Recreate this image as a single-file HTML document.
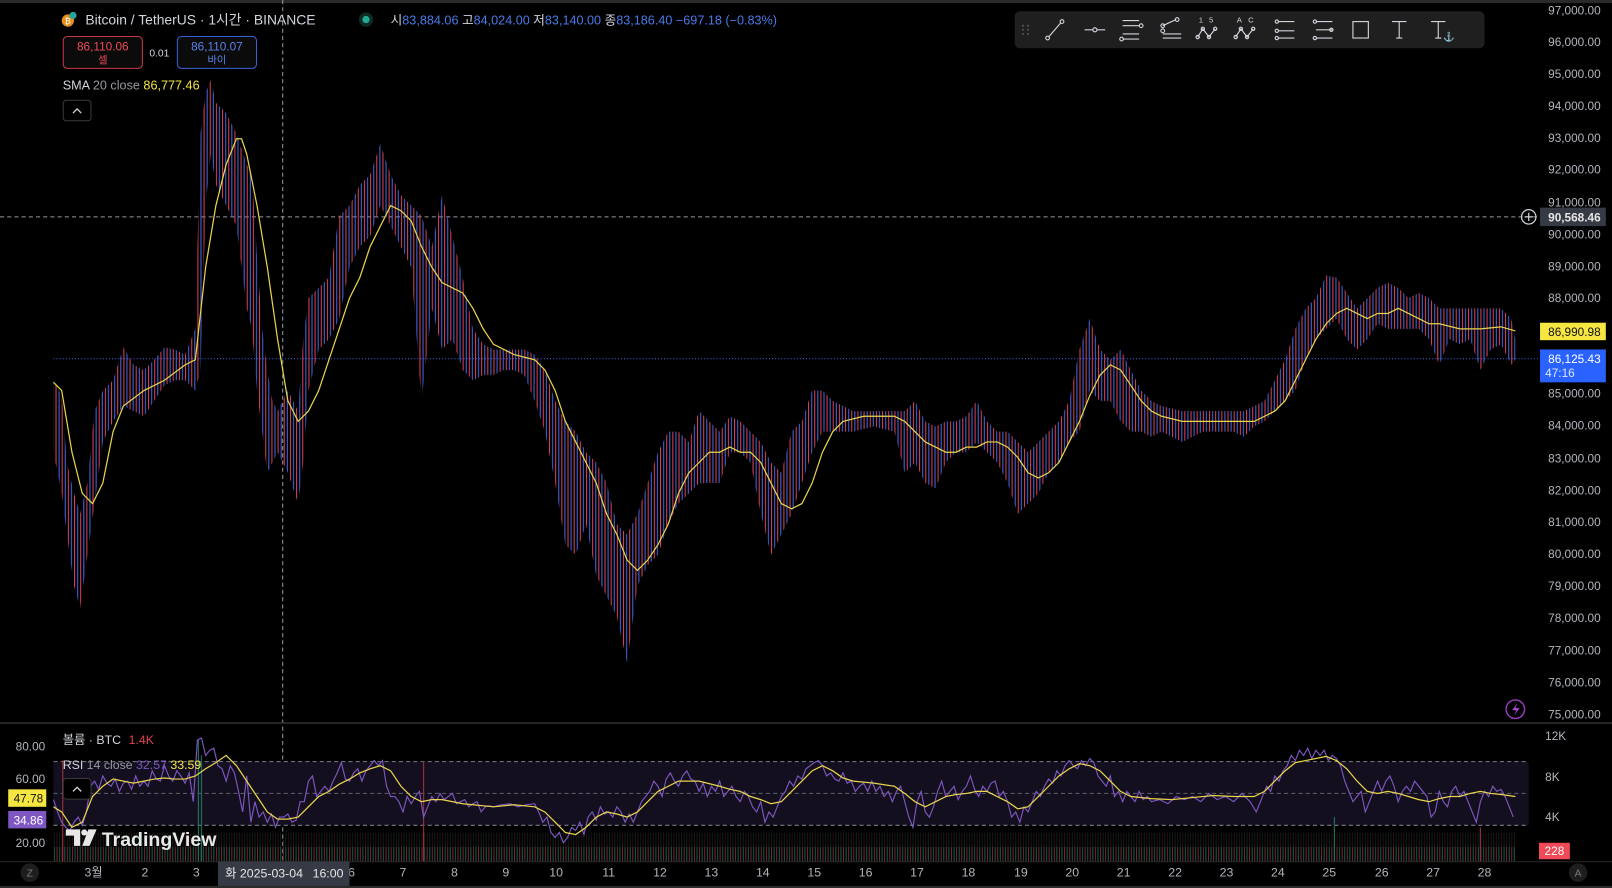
<!DOCTYPE html>
<html><head><meta charset="utf-8"><style>
html,body{margin:0;padding:0;background:#000;overflow:hidden}
svg{display:block}
text{font-family:"Liberation Sans","Noto Sans CJK KR",sans-serif}
</style></head><body>
<svg width="1612" height="888" viewBox="0 0 1568 864" preserveAspectRatio="none" xmlns="http://www.w3.org/2000/svg">
<defs>
<pattern id="cd" width="6" height="14" patternUnits="userSpaceOnUse">
<rect x="0" y="0" width="1" height="14" fill="#d8435c"/>
<rect x="3" y="0" width="1" height="14" fill="#4a68e0"/>
</pattern>
<pattern id="vol" width="5" height="40" patternUnits="userSpaceOnUse">
<rect x="0" y="0" width="1" height="40" fill="#8a3038"/>
<rect x="2.5" y="0" width="1" height="40" fill="#1e6b5e"/>
</pattern>
</defs>
<rect width="1568" height="864" fill="#000"/>
<rect width="1568" height="3" fill="#2a2a2a"/>
<g fill="#b2b5be" font-size="11.5" text-anchor="end">
<text x="1557" y="14">97,000.00</text><text x="1557" y="45">96,000.00</text><text x="1557" y="76">95,000.00</text><text x="1557" y="107">94,000.00</text><text x="1557" y="138">93,000.00</text><text x="1557" y="169">92,000.00</text><text x="1557" y="201">91,000.00</text><text x="1557" y="232">90,000.00</text><text x="1557" y="263">89,000.00</text><text x="1557" y="294">88,000.00</text><text x="1557" y="387">85,000.00</text><text x="1557" y="418">84,000.00</text><text x="1557" y="450">83,000.00</text><text x="1557" y="481">82,000.00</text><text x="1557" y="512">81,000.00</text><text x="1557" y="543">80,000.00</text><text x="1557" y="574">79,000.00</text><text x="1557" y="605">78,000.00</text><text x="1557" y="637">77,000.00</text><text x="1557" y="668">76,000.00</text><text x="1557" y="699">75,000.00</text>
</g>
<line x1="0" y1="211" x2="1496" y2="211" stroke="#9598a1" stroke-dasharray="4 3" stroke-width="1"/>
<line x1="52" y1="349" x2="1496" y2="349" stroke="#3b5bd6" stroke-dasharray="1 2" stroke-width="1"/>
<line x1="275" y1="0" x2="275" y2="838" stroke="#9598a1" stroke-dasharray="4 3" stroke-width="1"/>
<line x1="0" y1="703.5" x2="1568" y2="703.5" stroke="#2e2e2e" stroke-width="1.5"/>
<polygon fill="url(#cd)" points="52,370 60,385 65,450 72,480 78,500 85,470 92,400 100,380 110,370 120,338 130,355 140,360 150,350 160,338 170,340 180,345 190,320 195,130 200,90 205,78 210,100 220,110 230,130 240,160 245,170 250,250 255,320 260,360 265,390 270,400 280,380 290,400 295,330 300,290 310,280 320,270 330,210 340,200 350,180 360,170 370,140 380,170 390,190 400,200 410,210 420,240 430,190 440,230 450,270 460,320 470,335 480,340 500,340 510,340 520,345 530,360 540,390 550,410 560,420 570,440 580,450 590,470 600,510 610,520 620,500 630,470 640,440 650,420 660,420 670,430 680,400 690,410 700,420 710,405 720,410 730,420 740,430 750,450 760,460 770,420 780,410 790,380 800,380 810,390 820,395 830,400 850,400 870,400 880,400 890,390 900,410 910,415 920,410 930,410 940,405 950,390 960,410 970,420 980,420 990,430 1000,440 1010,430 1020,420 1030,410 1040,390 1050,340 1060,310 1070,340 1080,350 1090,340 1100,360 1110,380 1120,390 1130,395 1150,400 1170,400 1200,400 1210,400 1220,395 1230,390 1240,370 1250,350 1260,320 1270,300 1280,290 1290,268 1300,270 1310,285 1320,300 1330,290 1340,280 1350,275 1360,280 1370,290 1380,285 1390,290 1400,300 1410,300 1420,300 1430,300 1440,300 1450,300 1460,300 1470,310 1474,330 1474,350 1470,355 1460,335 1450,340 1440,360 1430,330 1420,335 1410,330 1400,355 1390,330 1380,320 1370,320 1360,320 1350,320 1340,315 1330,330 1320,340 1310,330 1300,310 1290,320 1280,330 1270,350 1260,380 1250,390 1240,400 1230,410 1220,415 1210,425 1200,420 1170,420 1150,430 1130,420 1120,425 1110,420 1100,420 1090,410 1080,390 1070,390 1060,380 1050,420 1040,430 1030,450 1020,460 1010,480 1000,490 990,500 980,470 970,450 960,440 950,430 940,440 930,440 920,450 910,475 900,470 890,450 880,460 870,420 850,415 830,420 820,420 810,420 800,420 790,440 780,470 770,500 760,520 750,540 740,500 730,450 720,440 710,440 700,470 690,470 680,470 670,480 660,490 650,510 640,540 630,550 620,570 610,645 600,600 590,580 580,560 570,510 560,540 550,530 540,470 530,420 520,390 510,365 500,360 490,360 480,365 470,365 460,370 450,360 440,330 430,340 420,300 410,390 400,260 390,240 380,220 370,200 360,230 350,240 340,260 330,310 320,330 310,340 300,380 295,450 290,490 280,460 270,440 265,450 260,460 255,420 250,380 245,320 240,300 230,220 220,200 210,180 205,150 200,200 195,360 190,380 180,370 170,370 160,375 150,390 140,405 130,400 120,395 110,410 100,430 92,490 85,540 78,592 72,570 65,520 60,480 52,440"/>
<polyline fill="none" stroke="#e8d44d" stroke-width="1.2" points="52,372 60,380 70,440 80,480 90,490 100,470 110,420 120,395 140,380 160,370 180,355 190,350 200,260 210,200 220,160 230,135 235,135 240,150 250,200 260,260 270,330 280,390 290,410 300,400 310,380 320,350 330,320 340,290 350,270 360,240 370,220 380,200 390,205 400,215 410,240 420,260 430,275 440,280 450,285 460,300 470,320 480,335 500,345 520,350 530,360 540,380 550,410 560,430 570,450 580,470 590,500 600,520 610,545 620,555 630,545 640,530 650,510 660,480 670,460 680,450 690,440 700,440 710,435 720,440 730,440 740,450 750,470 760,490 770,495 780,490 790,470 800,440 810,420 820,410 840,405 860,405 870,405 880,410 890,420 900,430 910,435 920,440 930,440 940,435 950,435 960,430 970,430 980,435 990,445 1000,460 1010,465 1020,460 1030,450 1040,430 1050,410 1060,385 1070,365 1080,355 1090,360 1100,375 1110,390 1120,400 1130,405 1150,410 1180,410 1200,410 1220,410 1230,405 1240,400 1250,390 1260,370 1270,350 1280,330 1290,315 1300,305 1310,300 1320,305 1330,310 1340,305 1350,305 1360,300 1370,305 1380,310 1390,315 1400,315 1420,320 1440,320 1460,318 1474,322"/>
<circle cx="1487" cy="211" r="7" fill="none" stroke="#d1d4dc" stroke-width="1.2"/>
<path d="M1483 211h8M1487 207v8" stroke="#d1d4dc" stroke-width="1.2"/>
<rect x="1498" y="202" width="64" height="18" fill="#363a45"/>
<text x="1557" y="215.5" fill="#e6e6e6" font-size="11.5" text-anchor="end" font-weight="bold">90,568.46</text>
<rect x="1498" y="314" width="64" height="17" fill="#f5e642"/>
<text x="1557" y="327" fill="#111" font-size="11.5" text-anchor="end">86,990.98</text>
<rect x="1498" y="340" width="64" height="32" fill="#2962ff"/>
<text x="1557" y="353" fill="#fff" font-size="11.5" text-anchor="end">86,125.43</text>
<text x="1503" y="367" fill="#dfe6ff" font-size="11.5">47:16</text>
<circle cx="1474" cy="690" r="9" fill="none" stroke="#9c3cc4" stroke-width="1.4"/>
<path d="M1476 684l-5 7h4l-2 5 5-7h-4z" fill="#b04ddb"/>
<circle cx="66" cy="20" r="6" fill="#e8901c"/>
<text x="63" y="23.5" fill="#fff" font-size="8">₿</text>
<circle cx="71" cy="15" r="3.5" fill="#26a69a"/>
<text x="83" y="24" fill="#d1d4dc" font-size="13.5">Bitcoin / TetherUS · 1시간 · BINANCE</text>
<circle cx="356" cy="19" r="7" fill="#0d2a25"/><circle cx="356" cy="19" r="3.5" fill="#22ab94"/>
<text x="380" y="24" font-size="12.3" fill="#d1d4dc">시<tspan fill="#4a7ae8">83,884.06</tspan> 고<tspan fill="#4a7ae8">84,024.00</tspan> 저<tspan fill="#4a7ae8">83,140.00</tspan> 종<tspan fill="#4a7ae8">83,186.40</tspan> <tspan fill="#4a7ae8">−697.18 (−0.83%)</tspan></text>
<rect x="61.5" y="35.5" width="77" height="31" rx="4" fill="#0b0b0b" stroke="#c93a45"/>
<text x="100" y="49" fill="#f04a58" font-size="11.5" text-anchor="middle">86,110.06</text>
<text x="100" y="62" fill="#f04a58" font-size="10" text-anchor="middle">셀</text>
<text x="155" y="55" fill="#d1d4dc" font-size="10" text-anchor="middle">0.01</text>
<rect x="172.5" y="35.5" width="77" height="31" rx="4" fill="#0b0b0b" stroke="#3a62d8"/>
<text x="211" y="49" fill="#5b82ee" font-size="11.5" text-anchor="middle">86,110.07</text>
<text x="211" y="62" fill="#5b82ee" font-size="10" text-anchor="middle">바이</text>
<text x="61" y="87" font-size="12.3" fill="#d1d4dc">SMA <tspan fill="#9598a1">20 close</tspan> <tspan fill="#f5e642">86,777.46</tspan></text>
<rect x="61.5" y="97.5" width="27" height="20" rx="3" fill="#000" stroke="#3a3a3a"/>
<path d="M71 110l4-4 4 4" fill="none" stroke="#d1d4dc" stroke-width="1.3"/>
<rect x="987" y="11" width="457" height="36" rx="5" fill="#1f1f1f"/>
<g fill="#555"><circle cx="995" cy="25" r="1"/><circle cx="1000" cy="25" r="1"/><circle cx="995" cy="29" r="1"/><circle cx="1000" cy="29" r="1"/><circle cx="995" cy="33" r="1"/><circle cx="1000" cy="33" r="1"/></g>
<g fill="none" stroke="#d1d4dc" stroke-width="1.1">
<line x1="1020" y1="36" x2="1032" y2="22"/><circle cx="1019" cy="37" r="1.8"/><circle cx="1033" cy="21" r="1.8"/>
<path d="M1055 29h8M1067 29h8"/><circle cx="1065" cy="29" r="2"/>
<path d="M1092 20h16M1092 25h16M1092 33h16M1092 38h16"/><circle cx="1110" cy="25" r="1.8"/><circle cx="1091" cy="38" r="1.8"/>
<path d="M1131 33h18M1131 37h18"/><circle cx="1131" cy="30" r="1.8"/><circle cx="1131" cy="25" r="1.8"/><circle cx="1145" cy="19" r="1.8"/><path d="M1131 25l13-6"/>
<path d="M1165 36l5-8 6 8 6-8"/><circle cx="1165" cy="36" r="1.6"/><circle cx="1170" cy="28" r="1.6"/><circle cx="1176" cy="36" r="1.6"/><circle cx="1182" cy="28" r="1.6"/>
<path d="M1202 36l5-8 6 8 6-8"/><circle cx="1202" cy="36" r="1.6"/><circle cx="1207" cy="28" r="1.6"/><circle cx="1213" cy="36" r="1.6"/><circle cx="1219" cy="28" r="1.6"/>
<path d="M1243 21h16M1243 30h16M1243 37h16"/><circle cx="1242" cy="21" r="1.6"/><circle cx="1242" cy="30" r="1.6"/><circle cx="1242" cy="37" r="1.6"/>
<path d="M1280 21h16M1280 29h16M1280 37h16"/><circle cx="1279" cy="21" r="1.6"/><circle cx="1295" cy="29" r="1.6"/><circle cx="1279" cy="37" r="1.6"/>
<rect x="1316" y="21" width="15" height="16"/>
<path d="M1354 21h14M1361 21v16M1358 37h6"/>
<path d="M1392 21h14M1399 21v16M1396 37h6"/>
</g>
<g fill="#d1d4dc" font-size="7.5"><text x="1166" y="22">1</text><text x="1176" y="22">5</text><text x="1203" y="22">A</text><text x="1214" y="22">C</text></g>
<text x="1404" y="39" fill="#d1d4dc" font-size="9">⚓</text>
<rect x="52" y="741" width="1435" height="62" fill="#140f1e"/>
<line x1="52" y1="741" x2="1487" y2="741" stroke="#787b86" stroke-dasharray="4 3"/>
<line x1="52" y1="772" x2="1487" y2="772" stroke="#555862" stroke-dasharray="4 3"/>
<line x1="52" y1="803" x2="1487" y2="803" stroke="#787b86" stroke-dasharray="4 3"/>
<rect x="52" y="824" width="1422" height="14" fill="url(#vol)" opacity="0.85"/>
<rect x="52" y="810" width="1422" height="14" fill="url(#vol)" opacity="0.3"/>
<g stroke-width="1.2"><line x1="61" y1="740" x2="61" y2="838" stroke="#8a3038"/><line x1="193" y1="720" x2="193" y2="838" stroke="#1e6b5e"/><line x1="196" y1="735" x2="196" y2="838" stroke="#1e6b5e"/><line x1="412" y1="741" x2="412" y2="838" stroke="#8a3038"/><line x1="1298" y1="795" x2="1298" y2="838" stroke="#1e6b5e"/><line x1="1440" y1="805" x2="1440" y2="838" stroke="#8a3038"/></g>
<polyline fill="none" stroke="#7e57c2" stroke-width="1.1" points="52,778 56,790 60,800 64,805 68,808 72,800 76,795 80,803 84,790 88,765 92,760 96,768 100,755 104,762 108,765 112,758 116,770 120,762 124,760 128,768 132,755 136,765 140,760 144,765 148,750 152,758 156,760 160,745 164,755 168,760 172,750 176,755 180,762 184,752 188,780 192,720 196,718 200,735 204,730 208,728 212,745 216,748 220,760 224,745 228,752 232,770 236,790 240,755 244,800 248,780 252,795 256,790 260,800 264,792 268,805 272,795 276,795 280,792 284,800 288,798 292,780 296,780 300,760 304,755 308,775 312,770 316,765 320,770 324,760 328,752 332,742 336,758 340,760 344,752 348,748 352,760 356,750 360,745 364,740 368,745 372,740 376,765 380,775 384,775 388,780 392,790 396,775 400,782 404,775 408,770 412,795 416,785 420,775 424,780 428,772 432,778 436,775 440,772 444,782 448,780 452,778 456,785 460,782 464,780 468,790 472,785 476,784 480,785 488,783 496,782 504,785 512,783 520,782 524,790 528,800 532,795 536,810 540,815 544,810 548,820 552,815 556,805 560,808 564,800 568,812 572,795 576,790 580,798 584,785 588,792 592,790 596,795 600,785 604,790 608,800 612,792 616,800 620,790 624,780 628,775 632,770 636,760 640,765 644,775 648,758 652,752 656,760 660,765 664,755 668,750 672,758 676,760 680,770 684,762 688,775 692,765 696,770 700,760 704,775 708,770 712,765 716,775 720,780 724,770 728,775 732,785 736,790 740,780 744,800 748,790 752,795 756,785 760,775 764,770 768,760 772,765 776,755 780,758 784,748 788,745 792,742 796,740 800,745 804,755 808,752 812,758 816,760 820,752 824,762 828,760 832,770 836,765 840,762 844,770 848,760 852,770 856,765 860,775 864,770 868,780 872,770 876,765 880,780 884,795 888,805 892,780 896,770 900,790 904,795 908,785 912,770 916,760 920,775 924,770 928,765 932,778 936,770 940,765 944,755 948,768 952,775 956,765 960,770 964,762 968,760 972,775 976,770 980,780 984,795 988,790 992,800 996,785 1000,790 1004,780 1008,770 1012,775 1016,765 1020,758 1024,762 1028,750 1032,755 1036,745 1040,740 1044,745 1048,748 1052,740 1056,745 1060,738 1064,742 1068,755 1072,760 1076,765 1080,755 1084,775 1088,770 1092,780 1096,770 1100,775 1104,780 1108,770 1112,778 1116,775 1120,780 1128,778 1136,782 1144,775 1152,778 1160,775 1168,780 1176,772 1184,778 1192,775 1200,780 1208,772 1216,780 1222,790 1228,775 1232,765 1236,770 1240,755 1244,760 1248,750 1252,745 1256,735 1260,740 1264,730 1268,735 1272,728 1276,738 1280,730 1284,735 1288,730 1292,740 1296,735 1300,738 1304,745 1308,760 1312,770 1316,780 1320,775 1324,770 1328,790 1332,780 1336,770 1340,760 1344,770 1348,760 1352,755 1356,765 1360,780 1364,770 1368,765 1372,770 1376,760 1380,765 1384,770 1388,775 1392,795 1396,790 1400,770 1404,780 1408,785 1412,770 1416,765 1420,775 1424,770 1428,780 1432,790 1436,800 1440,780 1444,770 1448,775 1452,765 1456,770 1460,768 1464,775 1468,785 1472,795"/>
<polyline fill="none" stroke="#e8d44d" stroke-width="1.2" points="52,785 60,790 70,805 80,800 90,775 100,765 110,758 120,760 130,762 140,760 150,758 160,757 170,758 180,758 190,755 200,748 210,742 220,735 230,745 240,760 250,775 260,790 270,797 280,797 290,795 300,785 310,775 320,770 330,763 340,758 350,752 360,748 370,745 380,750 390,765 400,775 410,780 420,778 430,778 440,780 450,782 460,783 480,785 500,783 520,785 530,790 540,800 550,810 560,812 570,805 580,795 590,790 600,792 610,795 620,790 630,780 640,770 650,765 660,760 680,760 700,765 710,768 720,770 730,775 740,778 750,782 760,780 770,770 780,760 790,750 800,745 810,750 820,757 830,760 850,762 870,765 880,772 890,780 900,785 910,780 920,775 930,773 940,772 950,770 960,770 970,775 980,780 990,787 1000,785 1010,775 1020,765 1030,755 1040,748 1050,743 1060,745 1070,750 1080,760 1090,770 1100,775 1120,777 1140,778 1160,776 1180,774 1200,775 1220,775 1230,770 1240,760 1250,750 1260,742 1270,740 1280,738 1290,736 1300,740 1310,748 1320,760 1330,770 1340,772 1350,770 1360,772 1370,775 1380,778 1390,780 1400,777 1410,775 1420,775 1430,772 1440,770 1450,772 1460,773 1474,775"/>
<text x="61" y="724" font-size="12" fill="#d1d4dc">볼륨 · BTC <tspan fill="#e0434f" dx="4">1.4K</tspan></text>
<text x="61" y="748" font-size="12" fill="#d1d4dc">RSI <tspan fill="#9598a1">14 close</tspan> <tspan fill="#7e57c2">32.57</tspan> <tspan fill="#f5e642">33.59</tspan></text>
<rect x="61.5" y="757.5" width="27" height="20" rx="3" fill="#000" stroke="#3a3a3a"/>
<path d="M71 770l4-4 4 4" fill="none" stroke="#d1d4dc" stroke-width="1.3"/>
<g fill="#b2b5be" font-size="11.5" text-anchor="end"><text x="44" y="730">80.00</text><text x="44" y="762">60.00</text><text x="44" y="824">20.00</text></g>
<rect x="8" y="768" width="37" height="17" fill="#f5e642"/><text x="42" y="781" font-size="11.5" text-anchor="end" fill="#111">47.78</text>
<rect x="8" y="789" width="37" height="17" fill="#7e57c2"/><text x="42" y="802" font-size="11.5" text-anchor="end" fill="#fff">34.86</text>
<g fill="#b2b5be" font-size="11.5"><text x="1503" y="720">12K</text><text x="1503" y="760">8K</text><text x="1503" y="799">4K</text></g>
<rect x="1497" y="820" width="30" height="16" fill="#f04a58"/><text x="1512" y="832" font-size="11.5" text-anchor="middle" fill="#fff">228</text>
<path d="M64 807h14v16h-6v-10h-8z" fill="#e8e8e8"/><circle cx="82" cy="810" r="3" fill="#e8e8e8"/><path d="M86 807h8l-7 16h-7z" fill="#e8e8e8"/>
<text x="99" y="823" font-size="19" font-weight="bold" fill="#e8e8e8">TradingView</text>
<line x1="0" y1="838.5" x2="1568" y2="838.5" stroke="#2a2a2a"/>
<g fill="#b2b5be" font-size="12" text-anchor="middle">
<text x="91" y="853">3월</text><text x="141" y="853">2</text><text x="191" y="853">3</text><text x="342" y="853">6</text><text x="392" y="853">7</text><text x="442" y="853">8</text><text x="492" y="853">9</text><text x="541" y="853">10</text><text x="592" y="853">11</text><text x="642" y="853">12</text><text x="692" y="853">13</text><text x="742" y="853">14</text><text x="792" y="853">15</text><text x="842" y="853">16</text><text x="892" y="853">17</text><text x="942" y="853">18</text><text x="993" y="853">19</text><text x="1043" y="853">20</text><text x="1093" y="853">21</text><text x="1143" y="853">22</text><text x="1193" y="853">23</text><text x="1243" y="853">24</text><text x="1293" y="853">25</text><text x="1344" y="853">26</text><text x="1394" y="853">27</text><text x="1444" y="853">28</text>
</g>
<rect x="212" y="838" width="128" height="24" fill="#363a45"/>
<text x="219" y="854" font-size="12" fill="#e6e6e6">화 2025-03-04 <tspan dx="6">16:00</tspan></text>
<circle cx="29" cy="849" r="9" fill="#1e1e1e"/><text x="29" y="853" font-size="10" text-anchor="middle" fill="#787b86">Z</text>
<circle cx="1535" cy="849" r="9" fill="#1e1e1e"/><text x="1535" y="853" font-size="10" text-anchor="middle" fill="#787b86">A</text>
<rect y="862" width="1568" height="2" fill="#2a2a2a"/>
</svg>
</body></html>
